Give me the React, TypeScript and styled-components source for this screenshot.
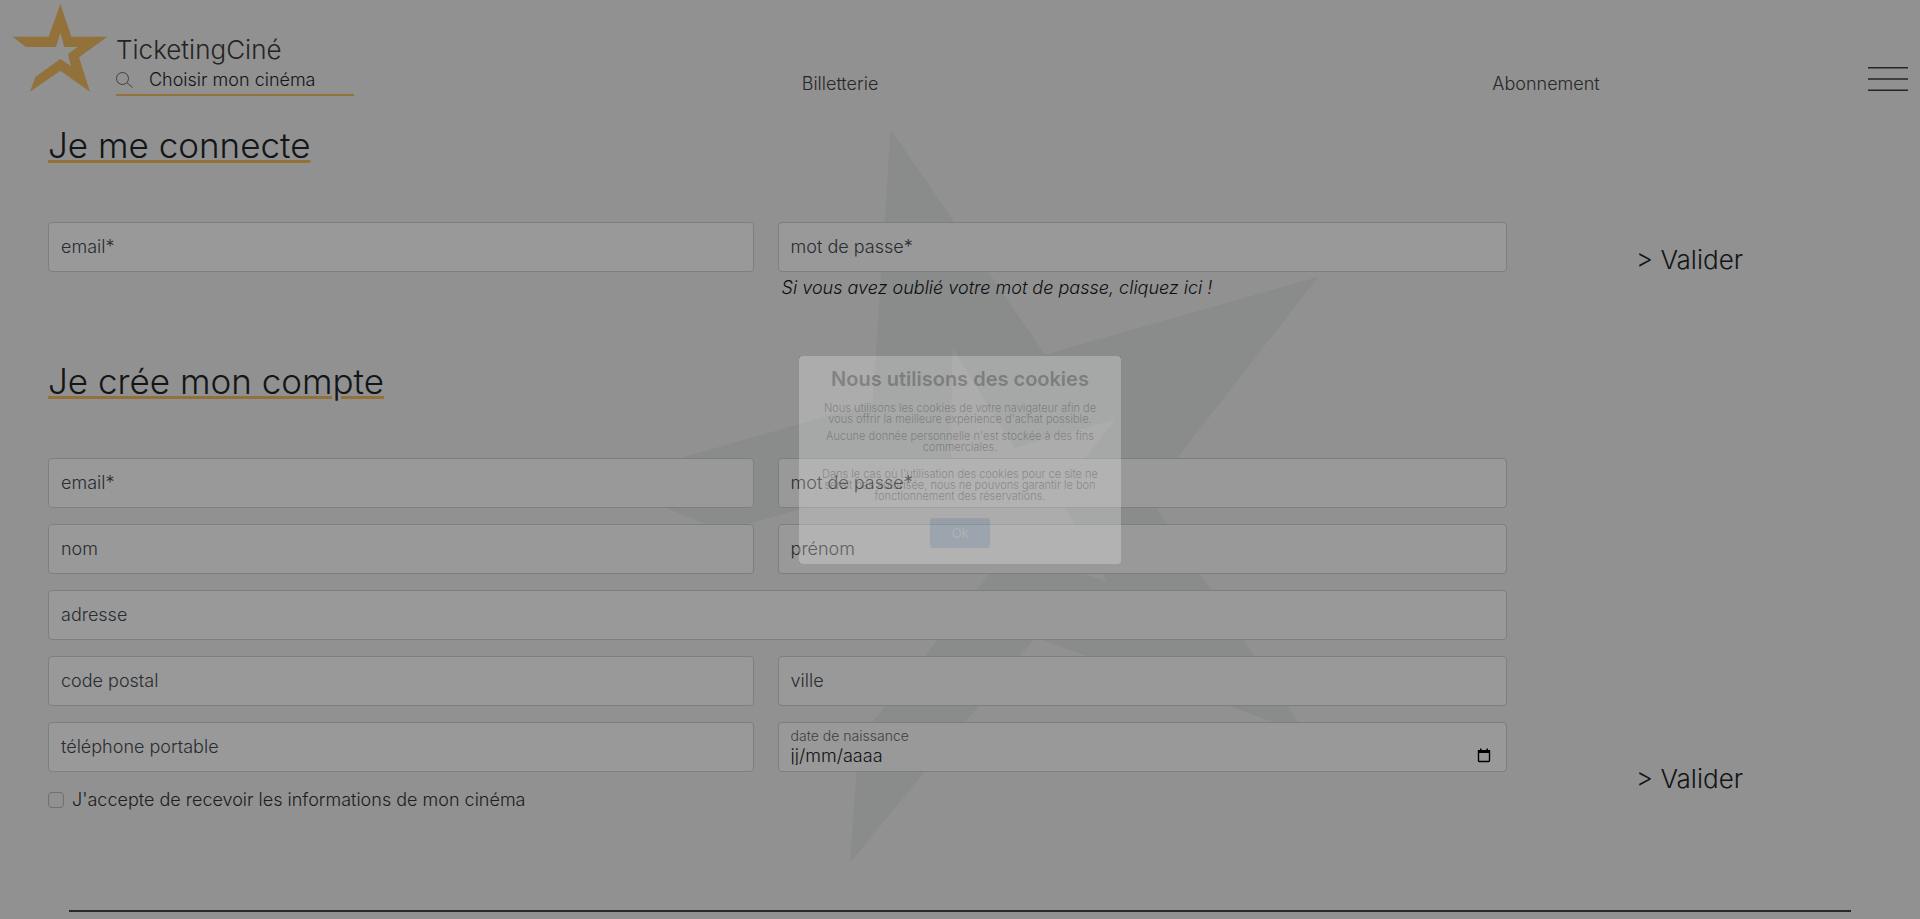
import React, { useId } from "react";
import styled, { createGlobalStyle } from "styled-components";

const GlobalStyle = createGlobalStyle`
  *, *::before, *::after { box-sizing: border-box; }
  html, body { margin: 0; }
  body {
    background: #f2f2f2;
    color: #212529;
    font-family: Inter, "Liberation Sans", sans-serif;
    font-size: 18px;
    font-weight: 300;
    line-height: 24px;
  }
  input, button { font: inherit; color: inherit; }
`;

const Page = styled.div`
  position: relative;
  min-height: 100vh;
`;

const Header = styled.header`
  display: grid;
  grid-template-columns: 456fr 768fr 644fr 40px;
  padding: 3px 12px 0 0;
  height: 96px;
`;

const Brand = styled.div`
  display: flex;
  gap: 8px;
  padding-left: 12px;
`;

const LogoSvg = styled.svg`
  width: 96px;
  height: 90px;
  flex: none;
  fill: #f3bc61;
`;

const BrandText = styled.div`
  display: flex;
  flex-direction: column;
  width: 238px;
  padding-top: 31px;
`;

const BrandName = styled.a`
  color: #3c3c3c;
  font-size: 26px;
  line-height: 32px;
  text-decoration: none;
`;

const CinemaSearch = styled.label`
  display: flex;
  align-items: center;
  gap: 16px;
  height: 30px;
  border-bottom: 2px solid #f3bc61;
`;

const CinemaInput = styled.input`
  width: 100%;
  min-width: 0;
  padding: 0;
  border: 0;
  background: none;
  outline: none;
  &::placeholder { color: #212529; opacity: 1; }
`;

const SearchSvg = styled.svg`
  width: 17px;
  height: 16px;
  flex: none;
  fill: none;
  stroke: #6a6a6a;
`;

const NavLink = styled.a`
  justify-self: center;
  margin-top: 69px;
  color: #444;
  text-decoration: none;
`;

const MenuButton = styled.button`
  display: flex;
  align-self: start;
  width: 40px;
  margin-top: 63px;
  padding: 0;
  border: 0;
  background: none;
`;

const MenuSvg = styled.svg`
  width: 40px;
  height: 26px;
  fill: none;
  stroke: #3c3c3c;
  stroke-width: 1.5;
`;

const Backdrop = styled.svg`
  position: absolute;
  top: 129px;
  left: 50%;
  width: 722px;
  height: 735px;
  transform: translateX(-50%);
  fill: #e4e9e6;
`;

const Main = styled.main`
  position: relative;
  padding: 25px 48px 0;
`;

const Title = styled.h1`
  margin: 0;
  font-size: 35px;
  line-height: 48px;
  font-weight: 300;
  text-decoration: underline #f3bc61 3px;
  text-underline-offset: 2px;
`;

const FormRow = styled.form<{ $space: number }>`
  display: grid;
  grid-template-columns: 4fr 1fr;
  padding: 53px 0 ${(p) => p.$space}px;
`;

const Fields = styled.div`
  display: grid;
  grid-template-columns: calc(50% - 24px) 1fr;
  gap: 16px 24px;
`;

const FieldBox = styled.div<{ $wide?: boolean }>`
  position: relative;
  display: flex;
  align-items: center;
  height: 50px;
  border: 1px solid #ced4da;
  border-radius: 4px;
  background: #fff;
  grid-column: ${(p) => (p.$wide ? "1 / -1" : "auto")};
`;

const FieldInput = styled.input`
  width: 100%;
  height: 100%;
  padding: 0 12px 2px;
  border: 0;
  border-radius: 4px;
  background: none;
  outline: none;
  &::placeholder { color: #444b52; opacity: 1; }
`;

const DateBox = styled(FieldBox)`
  flex-direction: column;
  align-items: stretch;
  padding: 3px 12px;
`;

const DateLabel = styled.label`
  color: #666c72;
  font-size: 14px;
  line-height: 19px;
`;

const DateLine = styled.div`
  display: flex;
  align-items: center;
  height: 20px;
`;

const DateInput = styled(FieldInput)`
  padding: 0;
  &::placeholder { color: #212529; }
`;

const DateButton = styled.button`
  display: flex;
  padding: 0 3px 0 0;
  border: 0;
  background: none;
`;

const HelpLink = styled.a`
  grid-column: 2;
  margin: -12px 0 0 4px;
  color: #16181a;
  font-style: italic;
  text-decoration: none;
`;

const Consent = styled.label`
  display: flex;
  align-items: center;
  gap: 8px;
  grid-column: 1 / -1;
  color: #333;
`;

const ConsentBox = styled.input`
  appearance: none;
  width: 16px;
  height: 16px;
  margin: 0;
  border: 1px solid #bbb;
  border-radius: 4px;
  background: transparent;
`;

const Submit = styled.button<{ $end?: boolean }>`
  align-self: ${(p) => (p.$end ? "end" : "start")};
  justify-self: center;
  margin: ${(p) => (p.$end ? "0 0 17px" : "22px 0 0")};
  padding: 0;
  border: 0;
  background: none;
  font-size: 26px;
  line-height: 32px;
`;

const Rule = styled.hr`
  height: 2px;
  margin: 0 21px;
  border: 0;
  background: #444;
`;

const Shade = styled.div`
  position: fixed;
  inset: 0;
  display: grid;
  place-items: center;
  background: rgba(0, 0, 0, 0.4);
`;

const Dialog = styled.section`
  display: flex;
  flex-direction: column;
  align-items: center;
  width: 322px;
  height: 208px;
  padding: 11px 16px 0;
  border-radius: 4px;
  background: #fff;
  color: #545454;
  opacity: 0.245;
  text-align: center;
`;

const DialogTitle = styled.h2`
  margin: 0 0 12px;
  font-size: 20px;
  line-height: 24px;
  font-weight: 600;
`;

const DialogText = styled.p<{ $gap: number }>`
  margin: 0 0 ${(p) => p.$gap}px;
  font-size: 11px;
  line-height: 11px;
  white-space: nowrap;
`;

const DialogButton = styled.button`
  width: 60px;
  height: 30px;
  padding: 0;
  border: 0;
  border-radius: 3px;
  background: #a5c8ea;
  color: #fff;
  font-size: 13px;
`;

const STAR =
  "38,110 146,110 181,12 214,110 322,110 237,172 270,275 181,212 90,275 106,231 181,177 213,199 204,162 233,141 193,141 181,98 168,141 78,141";

function Field({ label, type = "text", wide }: { label: string; type?: string; wide?: boolean }) {
  return (
    <FieldBox $wide={wide}>
      <FieldInput type={type} placeholder={label} aria-label={label} />
    </FieldBox>
  );
}

function DateField({ label }: { label: string }) {
  const id = useId();
  return (
    <DateBox>
      <DateLabel htmlFor={id}>{label}</DateLabel>
      <DateLine>
        <DateInput id={id} placeholder="jj/mm/aaaa" />
        <DateButton type="button" aria-label="calendrier">
          <svg width="14" height="15" viewBox="0 0 14 15">
            <path d="M1.5 3h11v9.5a1 1 0 0 1-1 1h-9a1 1 0 0 1-1-1z" fill="none" stroke="#000" strokeWidth="1.4" />
            <path d="M1 2h12v3H1zM3 .5h1.5V2H3zM9.5 .5H11V2H9.5z" />
          </svg>
        </DateButton>
      </DateLine>
    </DateBox>
  );
}

export default function App() {
  return (
    <Page>
      <GlobalStyle />
      <Backdrop viewBox="0 0 722 735" aria-hidden="true">
        <polygon points={STAR} transform="matrix(2.533 -0.719 0.722 2.542 -175.6 99.7)" />
      </Backdrop>
      <Header>
        <Brand>
          <LogoSvg viewBox="36 9 288 270" aria-hidden="true">
            <polygon points={STAR} />
          </LogoSvg>
          <BrandText>
            <BrandName href="#">TicketingCiné</BrandName>
            <CinemaSearch>
              <SearchSvg viewBox="0 0 17 16" aria-hidden="true">
                <circle cx="6.5" cy="6.5" r="6" />
                <path d="M11 10.8 16.5 15.5" />
              </SearchSvg>
              <CinemaInput placeholder="Choisir mon cinéma" aria-label="Choisir mon cinéma" />
            </CinemaSearch>
          </BrandText>
        </Brand>
        <NavLink href="#">Billetterie</NavLink>
        <NavLink href="#">Abonnement</NavLink>
        <MenuButton aria-label="Menu">
          <MenuSvg viewBox="0 0 40 26" aria-hidden="true">
            <path d="M0 1.7h40M0 13h40M0 24.3h40" />
          </MenuSvg>
        </MenuButton>
      </Header>
      <Main>
        <Title>Je me connecte</Title>
        <FormRow $space={57}>
          <Fields>
            <Field label="email*" type="email" />
            <Field label="mot de passe*" type="password" />
            <HelpLink href="#">Si vous avez oublié votre mot de passe, cliquez ici !</HelpLink>
          </Fields>
          <Submit type="button">&gt; Valider</Submit>
        </FormRow>
        <Title as="h2">Je crée mon compte</Title>
        <FormRow $space={98}>
          <Fields>
            <Field label="email*" type="email" />
            <Field label="mot de passe*" type="password" />
            <Field label="nom" />
            <Field label="prénom" />
            <Field label="adresse" wide />
            <Field label="code postal" />
            <Field label="ville" />
            <Field label="téléphone portable" type="tel" />
            <DateField label="date de naissance" />
            <Consent>
              <ConsentBox type="checkbox" />
              J'accepte de recevoir les informations de mon cinéma
            </Consent>
          </Fields>
          <Submit type="button" $end>&gt; Valider</Submit>
        </FormRow>
        <Rule />
      </Main>
      <Shade>
        <Dialog role="dialog" aria-label="Nous utilisons des cookies">
          <DialogTitle>Nous utilisons des cookies</DialogTitle>
          <DialogText $gap={6}>
            Nous utilisons les cookies de votre navigateur afin de
            <br />
            vous offrir la meilleure expèrience d'achat possible.
          </DialogText>
          <DialogText $gap={16}>
            Aucune donnée personnelle n'est stockée à des fins
            <br />
            commerciales.
          </DialogText>
          <DialogText $gap={16}>
            Dans le cas où l'utilisation des cookies pour ce site ne
            <br />
            serait pas autorisée, nous ne pouvons garantir le bon
            <br />
            fonctionnement des réservations.
          </DialogText>
          <DialogButton type="button">Ok</DialogButton>
        </Dialog>
      </Shade>
    </Page>
  );
}
